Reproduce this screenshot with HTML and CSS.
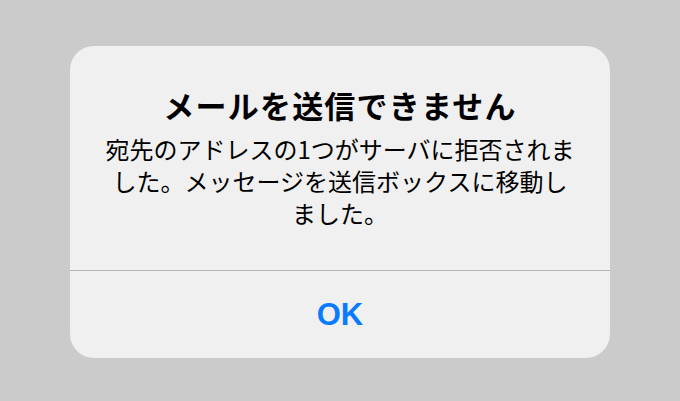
FILE: index.html
```html
<!DOCTYPE html>
<html lang="ja">
<head>
    <meta charset="UTF-8">
    <title>メールを送信できません</title>
    <link rel="stylesheet" href="styles.css">
</head>
<body>
<div class="alert">
    <div class="alert-content">
        <h1 class="alert-title">メールを送信できません</h1>
        <p class="alert-message">宛先のアドレスの1つがサーバに拒否されました。メッセージを送信ボックスに移動しました。</p>
    </div>
    <div class="alert-actions">
        <a href="javascript:;" class="alert-button">OK</a>
    </div>
</div>
</body>
</html>
```

FILE: styles.css
```css
*{
    margin: 0;
    padding: 0;
}
a{
    text-decoration: none;
}
html, body {
    height: 100%;
}
body {
    background: #cbcbcb;
    font-family: "Noto Sans CJK JP", "Noto Sans", sans-serif;
    color: #000;
    padding-top: 46px;
    box-sizing: border-box;
}
.alert {
    width: 540px;
    margin: 0 auto;
    background: #f0f0f0;
    border-radius: 24px;
    overflow: hidden;
}
.alert-content {
    padding: 41px 32px 41px;
    text-align: center;
    border-bottom: 1px solid #b3b3b3;
}
.alert-title {
    font-size: 31px;
    line-height: 36px;
    font-weight: bold;
    letter-spacing: 1.2px;
    margin-bottom: 10px;
}
.alert-message {
    font-size: 24px;
    line-height: 32px;
}
.alert-actions {
    height: 87px;
    display: flex;
    align-items: center;
    justify-content: center;
}
.alert-button {
    font-family: "Liberation Sans", Arial, sans-serif;
    font-weight: bold;
    font-size: 31px;
    color: #0a7aff;
}
```
